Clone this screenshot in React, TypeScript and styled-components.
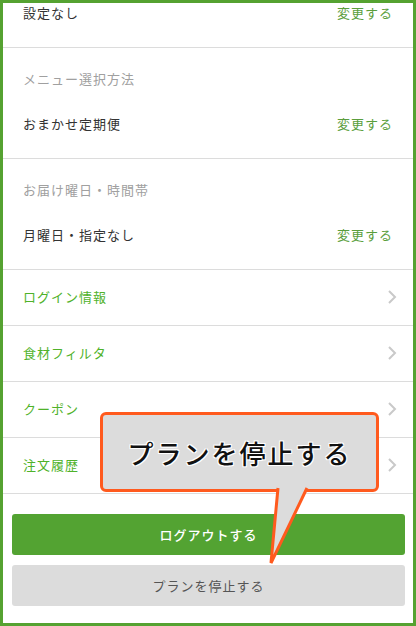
import React from "react";
import styled, { createGlobalStyle } from "styled-components";

const GlobalStyle = createGlobalStyle`
  html, body {
    margin: 0;
    padding: 0;
    background: #fff;
  }
  body {
    font-family: "Noto Sans CJK JP", "Noto Sans", sans-serif;
  }
`;

const settings = [
  { label: "メニュー選択方法", value: "おまかせ定期便" },
  { label: "お届け曜日・時間帯", value: "月曜日・指定なし" },
];

const links = ["ログイン情報", "食材フィルタ", "クーポン", "注文履歴"];

function Chevron() {
  return (
    <svg width="10" height="16" viewBox="0 0 10 16">
      <path
        d="M2 2 L8 8 L2 14"
        fill="none"
        stroke="#c9c9c9"
        strokeWidth="2"
      />
    </svg>
  );
}

export default function App() {
  return (
    <>
      <GlobalStyle />
      <Frame>
        <Section $top>
          <ValueRow>
            <Value>設定なし</Value>
            <ChangeLink>変更する</ChangeLink>
          </ValueRow>
        </Section>

        {settings.map((s) => (
          <Section key={s.label}>
            <Label>{s.label}</Label>
            <ValueRow>
              <Value>{s.value}</Value>
              <ChangeLink>変更する</ChangeLink>
            </ValueRow>
          </Section>
        ))}

        {links.map((l) => (
          <NavRow key={l}>
            <NavText>{l}</NavText>
            <Chevron />
          </NavRow>
        ))}

        <Buttons>
          <Button $primary>ログアウトする</Button>
          <Button>プランを停止する</Button>
        </Buttons>

        <Callout>
          <CalloutText>プランを停止する</CalloutText>
        </Callout>
        <CalloutTail width="60" height="84" viewBox="0 0 60 84">
          <polygon points="18,0 47,0 11,77" fill="#dcdcdc" />
          <path
            d="M18 2 L11 77 L47 2"
            fill="none"
            stroke="#ff5a1e"
            strokeWidth="3"
            strokeLinejoin="miter"
          />
        </CalloutTail>
      </Frame>
    </>
  );
}

const Frame = styled.div`
  position: relative;
  box-sizing: border-box;
  width: 416px;
  height: 626px;
  border: 3px solid #55a231;
  overflow: hidden;
  display: flex;
  flex-direction: column;
  background: #fff;
`;

const Section = styled.div<{ $top?: boolean }>`
  display: flex;
  flex-direction: column;
  gap: 25px;
  padding: ${({ $top }) => ($top ? "0 20px 24px" : "21px 20px 24px")};
  border-bottom: 1px solid #dcdcdc;
`;

const Label = styled.div`
  font-size: 13px;
  line-height: 20px;
  letter-spacing: 1px;
  color: #a0a0a0;
`;

const ValueRow = styled.div`
  display: flex;
  justify-content: space-between;
  align-items: center;
  height: 20px;
`;

const Value = styled.span`
  font-size: 13px;
  line-height: 20px;
  letter-spacing: 1px;
  color: #333;
`;

const ChangeLink = styled.span`
  font-size: 13px;
  line-height: 20px;
  letter-spacing: 1px;
  color: #5a9e3c;
`;

const NavRow = styled.div`
  display: flex;
  justify-content: space-between;
  align-items: center;
  box-sizing: border-box;
  height: 56px;
  padding: 0 16px 2px 20px;
  border-bottom: 1px solid #dcdcdc;
`;

const NavText = styled.span`
  font-size: 13px;
  letter-spacing: 1px;
  color: #4fb22a;
`;

const Buttons = styled.div`
  display: flex;
  flex-direction: column;
  gap: 10px;
  padding: 20px 8px 0 9px;
`;

const Button = styled.div<{ $primary?: boolean }>`
  display: flex;
  align-items: center;
  justify-content: center;
  height: 41px;
  border-radius: 3px;
  font-size: 13px;
  letter-spacing: 1px;
  background: ${({ $primary }) => ($primary ? "#53a332" : "#dcdcdc")};
  color: ${({ $primary }) => ($primary ? "#fff" : "#555")};
  font-weight: ${({ $primary }) => ($primary ? 500 : 400)};
`;

const Callout = styled.div`
  position: absolute;
  left: 97px;
  top: 409px;
  width: 279px;
  height: 80px;
  box-sizing: border-box;
  border: 3px solid #ff5a1e;
  border-radius: 6px;
  background: #dcdcdc;
  display: flex;
  align-items: center;
  justify-content: center;
`;

const CalloutText = styled.span`
  font-size: 26px;
  font-weight: 500;
  letter-spacing: 2px;
  color: #111;
  text-shadow: -1px -1px 0 #fff, 1px -1px 0 #fff, -1px 1px 0 #fff,
    1px 1px 0 #fff, 0 0 2px #fff;
`;

const CalloutTail = styled.svg`
  position: absolute;
  left: 257px;
  top: 483px;
`;
